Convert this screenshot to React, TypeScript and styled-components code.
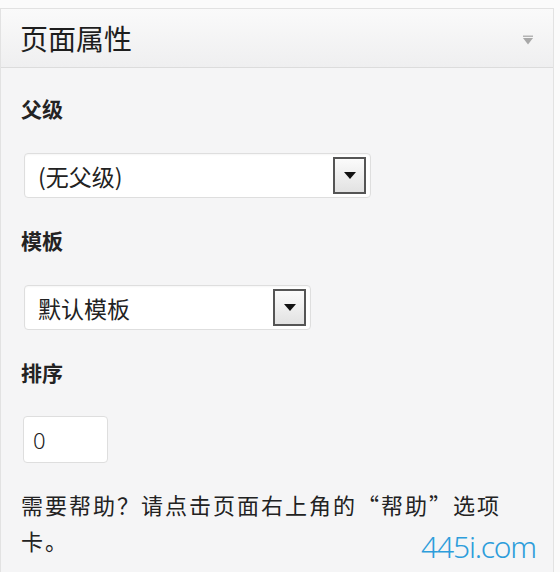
import React, { useState } from "react";
import styled, { createGlobalStyle } from "styled-components";

const GlobalStyle = createGlobalStyle`
  html, body {
    margin: 0;
    padding: 0;
    background: #fbfbfb;
    font-family: "Noto Sans CJK SC", "Noto Sans", sans-serif;
    color: #222;
  }
`;

const Screen = styled.div`
  position: relative;
  width: 560px;
  height: 572px;
  overflow: hidden;
  padding-top: 8px;
  box-sizing: border-box;
`;

const Panel = styled.div`
  width: 554px;
  height: 600px;
  box-sizing: border-box;
  border: 1px solid #e2e2e2;
  background: #f5f5f6;
`;

const Header = styled.div`
  height: 59px;
  box-sizing: border-box;
  display: flex;
  align-items: center;
  justify-content: space-between;
  padding: 0 20px 0 19px;
  border-bottom: 1px solid #dcdcdc;
  background: linear-gradient(to bottom, #fafafa, #efeff0);
`;

const Title = styled.h3`
  margin: 0;
  font-size: 28px;
  font-weight: 400;
  color: #1e1e1e;
`;

const Toggle = styled.svg`
  width: 10px;
  height: 10px;
  margin-top: 4px;
`;

const Body = styled.div`
  padding: 25px 40px 0 20px;
`;

const Label = styled.p`
  margin: 0;
  font-size: 21px;
  line-height: 30px;
  font-weight: 700;
  color: #232323;
`;

const SelectBox = styled.div<{ $width: number }>`
  width: ${(p) => p.$width}px;
  height: 45px;
  box-sizing: border-box;
  margin: 30px 0 27px 3px;
  display: flex;
  align-items: center;
  justify-content: space-between;
  padding: 0 4px 0 13px;
  background: #fff;
  border: 1px solid #dedede;
  border-radius: 4px;
  box-shadow: inset 0 1px 2px rgba(0, 0, 0, 0.04);
`;

const SelectText = styled.span`
  font-size: 23px;
  color: #222;
`;

const ArrowButton = styled.span`
  width: 33px;
  height: 37px;
  box-sizing: border-box;
  display: flex;
  align-items: center;
  justify-content: center;
  border: 2px solid #555;
  background: linear-gradient(to bottom, #fbfbfb 0%, #e2e2e2 100%);
`;

const OrderInput = styled.input`
  display: block;
  width: 85px;
  height: 47px;
  box-sizing: border-box;
  margin: 29px 0 23px 2px;
  padding: 0 9px;
  border: 1px solid #dedede;
  border-radius: 4px;
  background: #fff;
  font-family: "Noto Sans", sans-serif;
  font-size: 22px;
  font-weight: 300;
  color: #222;
  outline: none;
`;

const Help = styled.p`
  margin: 0;
  width: 500px;
  font-size: 22px;
  line-height: 36px;
  letter-spacing: 2px;
  color: #222;
`;

const Watermark = styled.span`
  position: absolute;
  right: 24px;
  bottom: 5px;
  font-family: "Noto Sans", "Open Sans", sans-serif;
  font-size: 30px;
  font-weight: 300;
  color: #2d9ddb;
  letter-spacing: -1.2px;
`;

const Caret = () => (
  <svg width="14" height="9" viewBox="0 0 14 9">
    <path d="M1 1h12L7 8z" fill="#111" />
  </svg>
);

const Select = ({ value, width }: { value: string; width: number }) => (
  <SelectBox $width={width}>
    <SelectText>{value}</SelectText>
    <ArrowButton>
      <Caret />
    </ArrowButton>
  </SelectBox>
);

const App = () => {
  const [order, setOrder] = useState<string>("0");

  return (
    <Screen>
      <GlobalStyle />
      <Panel>
        <Header>
          <Title>页面属性</Title>
          <Toggle viewBox="0 0 10 10">
            <rect x="0" y="0.5" width="10" height="1.5" fill="#b4b4b4" />
            <path d="M0 3h10L5 9.5z" fill="#a8a8a8" />
          </Toggle>
        </Header>
        <Body>
          <Label>父级</Label>
          <Select value="(无父级)" width={347} />
          <Label>模板</Label>
          <Select value="默认模板" width={287} />
          <Label>排序</Label>
          <OrderInput value={order} onChange={(e) => setOrder(e.target.value)} />
          <Help>需要帮助？请点击页面右上角的“帮助”选项卡。</Help>
        </Body>
      </Panel>
      <Watermark>445i.com</Watermark>
    </Screen>
  );
};

export default App;
